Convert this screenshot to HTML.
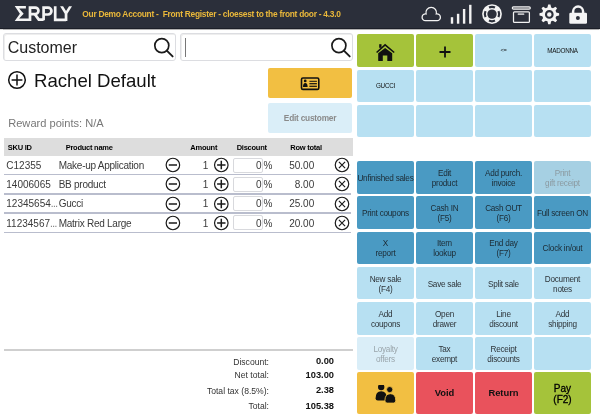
<!DOCTYPE html>
<html><head><meta charset="utf-8">
<style>
*{margin:0;padding:0;box-sizing:border-box}
body{will-change:transform}
html,body{width:600px;height:419px;overflow:hidden;background:#fff;font-family:"Liberation Sans",sans-serif}
.a{position:absolute}
.t{position:absolute;white-space:pre;line-height:1}
#top{position:absolute;left:0;top:0;width:600px;height:29px;background:#2b2f3a;border-bottom:1px solid #1c1f28;box-shadow:0 0.5px 1px rgba(0,0,0,.3)}
.inp{position:absolute;border:1.5px solid #dcdde1;border-radius:3px;background:#fff;box-shadow:inset 1px 1px 0 #eee}
.b{position:absolute;border-radius:2px;display:flex;align-items:center;justify-content:center;text-align:center;font-size:8.2px;letter-spacing:-0.25px;line-height:9.9px;color:#1c2a33;padding-top:3px}
.g{background:#a5c33a}
.lb{background:#b7e0f2;color:#2e3439}
.db{background:#4a9ac3}
.dd{background:#a6d0e3;color:#8b9aa1}
.ld{background:#daeef8;color:#9aa5ab}
.y{background:#f2bf42}
.r{background:#e9525c;color:#111;font-weight:bold;font-size:9.4px;letter-spacing:0;padding-top:0}
.hd{font-size:7.5px;letter-spacing:-0.25px;font-weight:bold;color:#000}
.cell{font-size:10px;color:#3a3a3a}
.lbl{font-size:8.6px;color:#333;text-align:right}
.val{font-size:9.3px;font-weight:bold;color:#111;text-align:right}
</style></head><body>
<div id="top"></div>
<!-- logo -->
<svg class="a" style="left:0;top:0" width="80" height="29" viewBox="0 0 80 29">
 <path fill="#f4f4f4" d="M14.7,6.1 H25.9 V8.4 H19.1 L23.7,13.8 L19.1,18.6 H29 V21.1 H14.7 L19.9,13.8 Z"/>
 <g fill="none" stroke="#f4f4f4" stroke-width="2.7" stroke-linejoin="miter">
  <path d="M30,21.1 V7.6 H35.2 A3.25,3.25 0 0 1 35.2,14.1 H30"/>
  <path d="M34.8,14.1 L38.8,19.6 H43.6"/>
  <path d="M43.6,20.2 V7.6 H48 A3.45,3.45 0 0 1 48,14.5 H43.6"/>
  <path d="M55.2,6.3 V19.8 H66"/>
  </g>
 <path fill="#f4f4f4" d="M60.1,6.3 H63.1 L66.05,11.1 L69,6.3 H72 L67.4,13.7 V21.1 H64.7 V13.7 Z"/>
</svg>
<div class="t" style="left:82.3px;top:9.6px;font-size:8.4px;letter-spacing:-0.27px;font-weight:bold;color:#eab83a">Our Demo Account -  Front Register - cloesest to the front door - 4.3.0</div>

<!-- top icons -->
<svg class="a" style="left:415px;top:0" width="185" height="29" viewBox="415 0 185 29">
 <path d="M425.5,20.7 A3.4,3.4 0 1 1 426.07,13.95 A5.3,5.3 0 1 1 436.32,13.97 A3.4,3.4 0 1 1 437,20.7 Z" fill="none" stroke="#f2f2f2" stroke-width="1.3"/>
 <g fill="#f2f2f2">
  <rect x="450.8" y="17.2" width="2.4" height="6.5"/>
  <rect x="456.9" y="13.8" width="2.4" height="9.9"/>
  <rect x="462.9" y="9" width="2.4" height="14.7"/>
  <rect x="469.1" y="4.8" width="2.4" height="18.9"/>
 </g>
 <circle cx="492" cy="14.1" r="9.9" fill="#f4f4f4"/>
 <circle cx="492" cy="14.1" r="4.7" fill="#2b2f3a"/>
 <g fill="none" stroke="#2b2f3a" stroke-width="2.2">
  <path d="M489,7.6 A7.1,7.1 0 0 1 495,7.6"/>
  <path d="M498.5,11.1 A7.1,7.1 0 0 1 498.5,17.1"/>
  <path d="M495,20.6 A7.1,7.1 0 0 1 489,20.6"/>
  <path d="M485.5,17.1 A7.1,7.1 0 0 1 485.5,11.1"/>
 </g>
  <rect x="512.3" y="6.9" width="18" height="2.3" rx="1.15" fill="#50535b" stroke="#f2f2f2" stroke-width="1.2"/>
 <rect x="513.5" y="11.8" width="15.9" height="10.6" rx="1" fill="none" stroke="#f2f2f2" stroke-width="1.25"/>
 <rect x="517.7" y="13.3" width="6.6" height="1.6" rx="0.5" fill="#bfc0c3"/>
 <g transform="translate(549.3,14.4)">
  <path fill="#f4f4f4" d="M-1.85,-6.96 L-1.16,-9.83 L1.16,-9.83 L1.85,-6.96 L3.62,-6.23 L6.13,-7.77 L7.77,-6.13 L6.23,-3.62 L6.96,-1.85 L9.83,-1.16 L9.83,1.16 L6.96,1.85 L6.23,3.62 L7.77,6.13 L6.13,7.77 L3.62,6.23 L1.85,6.96 L1.16,9.83 L-1.16,9.83 L-1.85,6.96 L-3.62,6.23 L-6.13,7.77 L-7.77,6.13 L-6.23,3.62 L-6.96,1.85 L-9.83,1.16 L-9.83,-1.16 L-6.96,-1.85 L-6.23,-3.62 L-7.77,-6.13 L-6.13,-7.77 L-3.62,-6.23 Z"/>
  <circle r="3.3" fill="none" stroke="#2b2f3a" stroke-width="2.1"/>
 </g>
 <rect x="569.3" y="12.7" width="17.7" height="11.1" rx="1.3" fill="#f4f4f4"/>
 <path d="M573.1,13 V11.6 A5,5 0 0 1 583.1,11.6 V13" fill="none" stroke="#f4f4f4" stroke-width="2.5"/>
 <circle cx="577.9" cy="18" r="2" fill="#2b2f3a"/>
</svg>

<!-- inputs -->
<div class="inp" style="left:3px;top:33.3px;width:173px;height:28.2px"></div>
<div class="t" style="left:7.7px;top:40px;font-size:16px;color:#222">Customer</div>
<svg class="a" style="left:150px;top:34px" width="30" height="27" viewBox="150 34 30 27">
 <circle cx="161.8" cy="45.6" r="7" fill="none" stroke="#1a1a1a" stroke-width="1.7"/>
 <path d="M166.8,50.6 L172.6,56.4" stroke="#1a1a1a" stroke-width="1.9" stroke-linecap="round"/>
</svg>
<div class="inp" style="left:180px;top:33.3px;width:173px;height:28.2px"></div>
<div class="a" style="left:184.5px;top:38px;width:1.2px;height:19px;background:#777"></div>
<svg class="a" style="left:325px;top:34px" width="30" height="27" viewBox="325 34 30 27">
 <circle cx="338.9" cy="45.6" r="7" fill="none" stroke="#1a1a1a" stroke-width="1.7"/>
 <path d="M343.9,50.6 L349.7,56.4" stroke="#1a1a1a" stroke-width="1.9" stroke-linecap="round"/>
</svg>

<!-- customer -->
<svg class="a" style="left:6px;top:69px" width="24" height="22" viewBox="6 69 24 22">
 <circle cx="17" cy="80" r="8.3" fill="none" stroke="#111" stroke-width="1.5"/>
 <path d="M11.6,80 H22.4 M17,74.6 V85.4" stroke="#111" stroke-width="1.5"/>
</svg>
<div class="t" style="left:34px;top:72.2px;font-size:18.6px;color:#111">Rachel Default</div>

<div class="a y" style="left:268.3px;top:68.1px;width:83.5px;height:29.7px;border-radius:2px"></div>
<svg class="a" style="left:298px;top:75px" width="24" height="18" viewBox="298 75 24 18">
 <rect x="301.5" y="78" width="17.3" height="11.4" rx="1.4" fill="none" stroke="#111" stroke-width="1.6"/>
 <circle cx="305.2" cy="80.9" r="1.4" fill="#111"/>
 <path d="M303,87 Q303,83.1 305.3,83.1 Q307.6,83.1 307.6,87 Z" fill="#111"/>
 <path d="M309.4,81.3 H316.9 M309.4,83.6 H316.9 M309.4,86.4 H316.9" stroke="#111" stroke-width="1"/>
 <path d="M309.4,85 H316.9" stroke="#111" stroke-width="1" opacity="0.45"/>
</svg>
<div class="a b ld" style="left:268.3px;top:103px;width:83.5px;height:29.5px;font-weight:bold;font-size:8.3px;letter-spacing:-0.22px;color:#8a8a8a;padding-top:2.5px">Edit customer</div>
<div class="t" style="left:8.2px;top:118px;font-size:11.1px;color:#777">Reward points: N/A</div>

<!-- table -->
<div class="a" style="left:3.7px;top:138.1px;width:349.6px;height:17.5px;background:#dddddd"></div>
<div class="t hd" style="left:7.8px;top:144.1px">SKU ID</div>
<div class="t hd" style="left:65.7px;top:144.1px">Product name</div>
<div class="t hd" style="left:190.3px;top:144.1px">Amount</div>
<div class="t hd" style="left:236.7px;top:144.1px">Discount</div>
<div class="t hd" style="left:290.3px;top:144.1px">Row total</div>
<div class="t cell" style="left:6.3px;top:160.80px">C12355</div>
<div class="t cell" style="left:58.7px;top:160.80px;letter-spacing:-0.25px">Make-up Application</div>
<div class="t cell" style="right:391.70px;top:160.80px">1</div>
<div class="a" style="left:232.75px;top:157.50px;width:30px;height:15px;border:1px solid #d8d9dd;border-radius:2px;background:#fff"></div>
<div class="t cell" style="right:338.40px;top:160.80px">0</div>
<div class="t cell" style="left:263.6px;top:160.80px">%</div>
<div class="t cell" style="right:285.80px;top:160.80px">50.00</div>
<div class="a" style="left:4.4px;top:173.75px;width:347px;height:1.5px;background:#b9bdcd"></div>
<svg class="a" style="left:160px;top:156.00px" width="200" height="18" viewBox="160 156.00 200 18">
 <g fill="none" stroke="#1a1a1a" stroke-width="1.2">
 <circle cx="172.9" cy="165.0" r="6.75"/><circle cx="221.3" cy="165.0" r="6.75"/><circle cx="342" cy="165.0" r="6.75"/></g>
 <g fill="none" stroke="#1a1a1a" stroke-width="1.5"><path d="M168.8,165.0 H177"/>
 <path d="M217.1,165.0 H225.5 M221.3,160.80 V169.20"/>
 <path d="M338.9,161.90 L345.1,168.10 M345.1,161.90 L338.9,168.10" stroke-width="1.2"/>
 </g></svg>
<div class="t cell" style="left:6.3px;top:180.05px">14006065</div>
<div class="t cell" style="left:58.7px;top:180.05px;letter-spacing:-0.25px">BB product</div>
<div class="t cell" style="right:391.70px;top:180.05px">1</div>
<div class="a" style="left:232.75px;top:176.75px;width:30px;height:15px;border:1px solid #d8d9dd;border-radius:2px;background:#fff"></div>
<div class="t cell" style="right:338.40px;top:180.05px">0</div>
<div class="t cell" style="left:263.6px;top:180.05px">%</div>
<div class="t cell" style="right:285.80px;top:180.05px">8.00</div>
<div class="a" style="left:4.4px;top:193.00px;width:347px;height:1.5px;background:#b9bdcd"></div>
<svg class="a" style="left:160px;top:175.25px" width="200" height="18" viewBox="160 175.25 200 18">
 <g fill="none" stroke="#1a1a1a" stroke-width="1.2">
 <circle cx="172.9" cy="184.25" r="6.75"/><circle cx="221.3" cy="184.25" r="6.75"/><circle cx="342" cy="184.25" r="6.75"/></g>
 <g fill="none" stroke="#1a1a1a" stroke-width="1.5"><path d="M168.8,184.25 H177"/>
 <path d="M217.1,184.25 H225.5 M221.3,180.05 V188.45"/>
 <path d="M338.9,181.15 L345.1,187.35 M345.1,181.15 L338.9,187.35" stroke-width="1.2"/>
 </g></svg>
<div class="t cell" style="left:6.3px;top:199.30px">12345654<span style="letter-spacing:-0.6px;color:#777">...</span></div>
<div class="t cell" style="left:58.7px;top:199.30px;letter-spacing:-0.25px">Gucci</div>
<div class="t cell" style="right:391.70px;top:199.30px">1</div>
<div class="a" style="left:232.75px;top:196.00px;width:30px;height:15px;border:1px solid #d8d9dd;border-radius:2px;background:#fff"></div>
<div class="t cell" style="right:338.40px;top:199.30px">0</div>
<div class="t cell" style="left:263.6px;top:199.30px">%</div>
<div class="t cell" style="right:285.80px;top:199.30px">25.00</div>
<div class="a" style="left:4.4px;top:212.25px;width:347px;height:1.5px;background:#b9bdcd"></div>
<svg class="a" style="left:160px;top:194.50px" width="200" height="18" viewBox="160 194.50 200 18">
 <g fill="none" stroke="#1a1a1a" stroke-width="1.2">
 <circle cx="172.9" cy="203.5" r="6.75"/><circle cx="221.3" cy="203.5" r="6.75"/><circle cx="342" cy="203.5" r="6.75"/></g>
 <g fill="none" stroke="#1a1a1a" stroke-width="1.5"><path d="M168.8,203.5 H177"/>
 <path d="M217.1,203.5 H225.5 M221.3,199.30 V207.70"/>
 <path d="M338.9,200.40 L345.1,206.60 M345.1,200.40 L338.9,206.60" stroke-width="1.2"/>
 </g></svg>
<div class="t cell" style="left:6.3px;top:218.55px">11234567<span style="letter-spacing:-0.6px;color:#777">...</span></div>
<div class="t cell" style="left:58.7px;top:218.55px;letter-spacing:-0.25px">Matrix Red Large</div>
<div class="t cell" style="right:391.70px;top:218.55px">1</div>
<div class="a" style="left:232.75px;top:215.25px;width:30px;height:15px;border:1px solid #d8d9dd;border-radius:2px;background:#fff"></div>
<div class="t cell" style="right:338.40px;top:218.55px">0</div>
<div class="t cell" style="left:263.6px;top:218.55px">%</div>
<div class="t cell" style="right:285.80px;top:218.55px">20.00</div>
<div class="a" style="left:4.4px;top:231.50px;width:347px;height:1.5px;background:#b9bdcd"></div>
<svg class="a" style="left:160px;top:213.75px" width="200" height="18" viewBox="160 213.75 200 18">
 <g fill="none" stroke="#1a1a1a" stroke-width="1.2">
 <circle cx="172.9" cy="222.75" r="6.75"/><circle cx="221.3" cy="222.75" r="6.75"/><circle cx="342" cy="222.75" r="6.75"/></g>
 <g fill="none" stroke="#1a1a1a" stroke-width="1.5"><path d="M168.8,222.75 H177"/>
 <path d="M217.1,222.75 H225.5 M221.3,218.55 V226.95"/>
 <path d="M338.9,219.65 L345.1,225.85 M345.1,219.65 L338.9,225.85" stroke-width="1.2"/>
 </g></svg>

<div class="a" style="left:3.7px;top:349.2px;width:349px;height:1.5px;background:#cfcfcf"></div>
<div class="t lbl" style="right:331px;top:357.5px">Discount:</div>
<div class="t lbl" style="right:331px;top:371.3px">Net total:</div>
<div class="t lbl" style="right:331px;top:386.5px">Total tax (8.5%):</div>
<div class="t lbl" style="right:331px;top:401.7px">Total:</div>
<div class="t val" style="right:266px;top:357.3px">0.00</div>
<div class="t val" style="right:266px;top:371.1px">103.00</div>
<div class="t val" style="right:266px;top:386.3px">2.38</div>
<div class="t val" style="right:266px;top:401.5px">105.38</div>

<div class="b g" style="left:357.2px;top:34.2px;width:56.6px;height:32.6px"><svg width="22" height="20" viewBox="374 40.8 22 20" style="margin:0 0 0 0"><path d="M376.6,51.3 L385.1,43.6 L394.2,51.3" fill="none" stroke="#111" stroke-width="1.6"/><rect x="379.2" y="43" width="2.3" height="3.6" fill="#111"/><path d="M378.2,52 L385.1,46.9 L392.2,52 V59.2 Q392.2,59.7 391.7,59.7 H387.3 V54.2 H382.8 V59.7 H378.7 Q378.2,59.7 378.2,59.2 Z" fill="#111"/></svg></div>
<div class="b g" style="left:416.2px;top:34.2px;width:56.6px;height:32.6px"><svg width="14" height="14" viewBox="-1 0 14 14"><path d="M1.5,7 H12.5 M7,1.5 V12.5" stroke="#111" stroke-width="1.8"/></svg></div>
<div class="b lb" style="left:475.2px;top:34.2px;width:56.6px;height:32.6px"><span style="font-size:5.6px;color:#111;margin-top:-2px">&lt;=</span></div>
<div class="b lb" style="left:534.2px;top:34.2px;width:56.6px;height:32.6px"><span style="font-size:6.3px;color:#111;margin-top:-2px">MADONNA</span></div>
<div class="b lb" style="left:357.2px;top:69.5px;width:56.6px;height:32.6px"><span style="font-size:6.3px;color:#111;margin-top:-2px">GUCCI</span></div>
<div class="b lb" style="left:416.2px;top:69.5px;width:56.6px;height:32.6px"></div>
<div class="b lb" style="left:475.2px;top:69.5px;width:56.6px;height:32.6px"></div>
<div class="b lb" style="left:534.2px;top:69.5px;width:56.6px;height:32.6px"></div>
<div class="b lb" style="left:357.2px;top:104.7px;width:56.6px;height:32.6px"></div>
<div class="b lb" style="left:416.2px;top:104.7px;width:56.6px;height:32.6px"></div>
<div class="b lb" style="left:475.2px;top:104.7px;width:56.6px;height:32.6px"></div>
<div class="b lb" style="left:534.2px;top:104.7px;width:56.6px;height:32.6px"></div>
<div class="b db" style="left:357.2px;top:161.2px;width:56.6px;height:32.6px">Unfinished sales</div>
<div class="b db" style="left:416.2px;top:161.2px;width:56.6px;height:32.6px">Edit<br>product</div>
<div class="b db" style="left:475.2px;top:161.2px;width:56.6px;height:32.6px">Add purch.<br>invoice</div>
<div class="b dd" style="left:534.2px;top:161.2px;width:56.6px;height:32.6px">Print<br>gift receipt</div>
<div class="b db" style="left:357.2px;top:196.4px;width:56.6px;height:32.6px">Print coupons</div>
<div class="b db" style="left:416.2px;top:196.4px;width:56.6px;height:32.6px">Cash IN<br>(F5)</div>
<div class="b db" style="left:475.2px;top:196.4px;width:56.6px;height:32.6px">Cash OUT<br>(F6)</div>
<div class="b db" style="left:534.2px;top:196.4px;width:56.6px;height:32.6px">Full screen ON</div>
<div class="b db" style="left:357.2px;top:231.6px;width:56.6px;height:32.6px">X<br>report</div>
<div class="b db" style="left:416.2px;top:231.6px;width:56.6px;height:32.6px">Item<br>lookup</div>
<div class="b db" style="left:475.2px;top:231.6px;width:56.6px;height:32.6px">End day<br>(F7)</div>
<div class="b db" style="left:534.2px;top:231.6px;width:56.6px;height:32.6px">Clock in/out</div>
<div class="b lb" style="left:357.2px;top:266.8px;width:56.6px;height:32.6px">New sale<br>(F4)</div>
<div class="b lb" style="left:416.2px;top:266.8px;width:56.6px;height:32.6px">Save sale</div>
<div class="b lb" style="left:475.2px;top:266.8px;width:56.6px;height:32.6px">Split sale</div>
<div class="b lb" style="left:534.2px;top:266.8px;width:56.6px;height:32.6px">Document<br>notes</div>
<div class="b lb" style="left:357.2px;top:302.0px;width:56.6px;height:32.6px">Add<br>coupons</div>
<div class="b lb" style="left:416.2px;top:302.0px;width:56.6px;height:32.6px">Open<br>drawer</div>
<div class="b lb" style="left:475.2px;top:302.0px;width:56.6px;height:32.6px">Line<br>discount</div>
<div class="b lb" style="left:534.2px;top:302.0px;width:56.6px;height:32.6px">Add<br>shipping</div>
<div class="b ld" style="left:357.2px;top:337.2px;width:56.6px;height:32.6px">Loyalty<br>offers</div>
<div class="b lb" style="left:416.2px;top:337.2px;width:56.6px;height:32.6px">Tax<br>exempt</div>
<div class="b lb" style="left:475.2px;top:337.2px;width:56.6px;height:32.6px">Receipt<br>discounts</div>
<div class="b lb" style="left:534.2px;top:337.2px;width:56.6px;height:32.6px"></div>
<div class="b y" style="left:357.2px;top:372.3px;width:56.6px;height:41.5px"><svg width="24" height="20" viewBox="373 384 24 20"><circle cx="381.2" cy="386.1" r="3.2" fill="#111"/><path d="M375.6,397.3 Q375.6,390.2 381.2,390.2 Q386.8,390.2 386.8,397.3 Q386.8,399.6 384.6,399.6 H377.8 Q375.6,399.6 375.6,397.3 Z" fill="#111"/><circle cx="389.7" cy="388.6" r="3.1" fill="#111" stroke="#f2bf42" stroke-width="0.8"/><path d="M384.9,399.8 Q384.9,392.7 390.4,392.7 Q395.8,392.7 395.8,399.8 Q395.8,402.1 393.6,402.1 H387.1 Q384.9,402.1 384.9,399.8 Z" fill="#111" stroke="#f2bf42" stroke-width="0.9"/></svg></div>
<div class="b r" style="left:416.2px;top:372.3px;width:56.6px;height:41.5px">Void</div>
<div class="b r" style="left:475.2px;top:372.3px;width:56.6px;height:41.5px">Return</div>
<div class="b g" style="left:534.2px;top:372.3px;width:56.6px;height:41.5px"><span style="font-size:10px;line-height:11.4px;letter-spacing:0;color:#000;margin-top:-1px;-webkit-text-stroke:0.3px #000">Pay<br>(F2)</span></div>
</body></html>
